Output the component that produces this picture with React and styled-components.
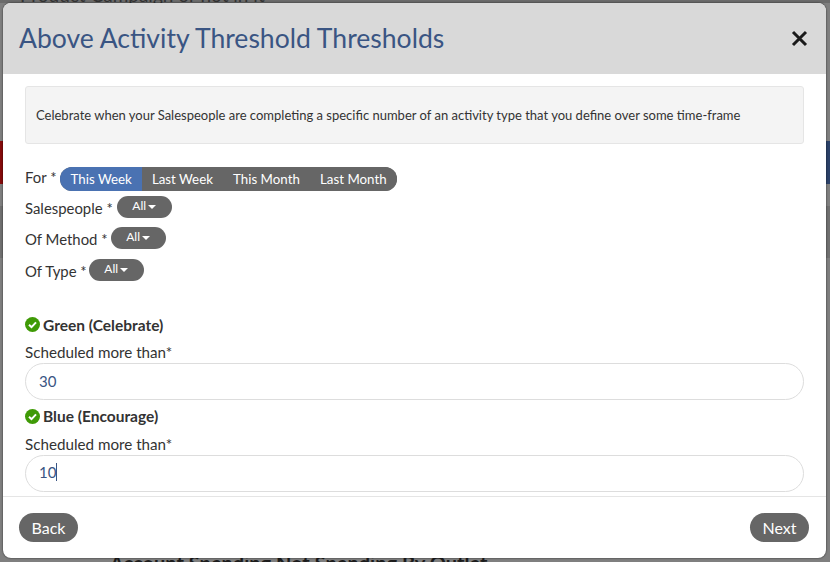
import styled, { createGlobalStyle } from 'styled-components'

const GlobalStyle = createGlobalStyle`
    * {
        box-sizing: border-box;
    }
    html,
    body {
        margin: 0;
        padding: 0;
        height: 100%;
        overflow: hidden;
        background: #7f7f7f;
        font-family: Lato, 'Open Sans', sans-serif;
    }
`

const Page = styled.div`
    position: relative;
    width: 830px;
    height: 562px;
    display: flex;
    flex-direction: column;
    overflow: hidden;
    background: #7f7f7f;
`

const TopStrip = styled.div`
    height: 3px;
    flex: none;
    display: flex;
    align-items: flex-end;
    padding-left: 20px;
    overflow: hidden;
    background: #6b6b6b;
    font-size: 19px;
    line-height: 16px;
    color: #333;
    white-space: nowrap;
`

const NavBand = styled.div`
    height: 43px;
    flex: none;
    margin-top: 138px;
    background: linear-gradient(to right, #860b0b 50%, #2b4168 50%);
`

const DimBand = styled.div`
    height: 52px;
    flex: none;
    margin-top: 22px;
    background: #707070;
`

const BottomStrip = styled.div`
    height: 6px;
    flex: none;
    margin-top: auto;
    padding-left: 110px;
    font-size: 20px;
    line-height: 14px;
    font-weight: 700;
    color: #1c1c1c;
    white-space: nowrap;
`

const Modal = styled.div`
    position: absolute;
    left: 3px;
    top: 3px;
    width: 823px;
    height: 555px;
    display: flex;
    flex-direction: column;
    background: #fff;
    border-radius: 8px;
    overflow: hidden;
    box-shadow: 0 0 2px rgba(0, 0, 0, 0.75);
`

const Header = styled.header`
    height: 71px;
    flex: none;
    display: flex;
    align-items: center;
    justify-content: space-between;
    padding: 0 18px 0 16px;
    background: #d9d9d9;
`

const Title = styled.h1`
    margin: 0 0 2px;
    font-size: 26.55px;
    font-weight: 400;
    color: #3a5583;
`

const CloseButton = styled.button`
    display: flex;
    padding: 0;
    border: 0;
    background: none;
    color: #1a1a1a;
`

const Body = styled.div`
    flex: 1;
    padding: 12px 22px 0 22px;
    overflow: hidden;
`

const Note = styled.div`
    height: 58px;
    display: flex;
    align-items: center;
    padding: 0 10px;
    font-size: 13px;
    color: #333;
    background: #f4f4f4;
    border: 1px solid #e5e5e5;
    border-radius: 3px;
`

const Filters = styled.div`
    margin-top: 17px;
    margin-bottom: 28.5px;
`

const FilterRow = styled.div`
    display: flex;
    align-items: center;
    gap: ${p => p.$gap || 4}px;
    height: 31px;
    font-size: 14.9px;
    color: #333;

    &:last-child {
        margin-top: 1px;
    }
`

const Segments = styled.div`
    display: flex;
    height: 24px;
    margin-top: 4px;
    border-radius: 12px;
    overflow: hidden;
    background: #666;
`

const Segment = styled.span`
    display: flex;
    align-items: center;
    padding: 0 10.1px;
    font-size: 13.3px;
    color: #fff;
    background: ${p => (p.$active ? '#4a72b2' : '#666')};
`

const Pill = styled.span`
    display: flex;
    align-items: center;
    justify-content: center;
    gap: 2px;
    width: 55px;
    height: 22px;
    margin-top: -2px;
    padding-bottom: 2px;
    border-radius: 11px;
    background: #666;
    color: #fff;
    font-size: 12px;
`

const Caret = styled.i`
    width: 0;
    height: 0;
    margin-top: 3px;
    border-left: 4px solid transparent;
    border-right: 4px solid transparent;
    border-top: 4px solid #fff;
`

const LevelName = styled.div`
    display: flex;
    align-items: center;
    gap: 3px;
    height: 20px;
    font-size: 15.5px;
    font-weight: 700;
    color: #333;
`

const FieldLabel = styled.div`
    margin-top: 7.5px;
    height: 20px;
    line-height: 20px;
    font-size: 15.2px;
    color: #333;
`

const Field = styled.div`
    display: flex;
    align-items: center;
    height: 37px;
    margin: 1px 0 6px;
    padding: 0 13px 2px;
    font-size: 15px;
    color: #3a5583;
    border: 1px solid #ddd;
    border-radius: 19px;
`

const TextCursor = styled.i`
    width: 1px;
    height: 18px;
    background: #3a5583;
`

const Footer = styled.footer`
    height: 62px;
    flex: none;
    display: flex;
    justify-content: space-between;
    padding: 16px 17px 0 16px;
    border-top: 1px solid #e5e5e5;
`

const PillButton = styled.button`
    width: 59px;
    height: 29px;
    padding: 0 0 1px;
    border: 0;
    border-radius: 15px;
    background: #666;
    color: #fff;
    font-family: inherit;
    font-size: 16px;
`

function CheckBadge() {
    return (
        <svg width="15" height="15" viewBox="0 0 15 15">
            <circle cx="7.5" cy="7.5" r="7.5" fill="#3f9a06" />
            <path d="M4 7.8l2.5 2.4L11 5.4" fill="none" stroke="#fff" strokeWidth="2" />
        </svg>
    )
}

const periods = ['This Week', 'Last Week', 'This Month', 'Last Month']
const dropdowns = [
    { label: 'Salespeople *', gap: 4 },
    { label: 'Of Method *', gap: 3 },
    { label: 'Of Type *', gap: 2 },
]

export default function App() {
    return (
        <Page>
            <GlobalStyle />
            <TopStrip>Product Campaign or not in it</TopStrip>
            <NavBand />
            <DimBand />
            <BottomStrip>Account Spending Not Spending By Outlet</BottomStrip>
            <Modal>
                <Header>
                    <Title>Above Activity Threshold Thresholds</Title>
                    <CloseButton aria-label="Close">
                        <svg width="17" height="17" viewBox="0 0 17 17">
                            <path d="M2 2l13 13M15 2L2 15" stroke="currentColor" strokeWidth="3" />
                        </svg>
                    </CloseButton>
                </Header>
                <Body>
                    <Note>
                        Celebrate when your Salespeople are completing a specific number of an activity type that you define over some time-frame
                    </Note>
                    <Filters>
                        <FilterRow>
                            For *
                            <Segments>
                                {periods.map((p, i) => (
                                    <Segment key={p} $active={i === 0}>{p}</Segment>
                                ))}
                            </Segments>
                        </FilterRow>
                        {dropdowns.map(d => (
                            <FilterRow key={d.label} $gap={d.gap}>
                                {d.label}
                                <Pill>All<Caret /></Pill>
                            </FilterRow>
                        ))}
                    </Filters>
                    <LevelName><CheckBadge />Green (Celebrate)</LevelName>
                    <FieldLabel>Scheduled more than*</FieldLabel>
                    <Field>30</Field>
                    <LevelName><CheckBadge />Blue (Encourage)</LevelName>
                    <FieldLabel>Scheduled more than*</FieldLabel>
                    <Field>10<TextCursor /></Field>
                </Body>
                <Footer>
                    <PillButton>Back</PillButton>
                    <PillButton>Next</PillButton>
                </Footer>
            </Modal>
        </Page>
    )
}
